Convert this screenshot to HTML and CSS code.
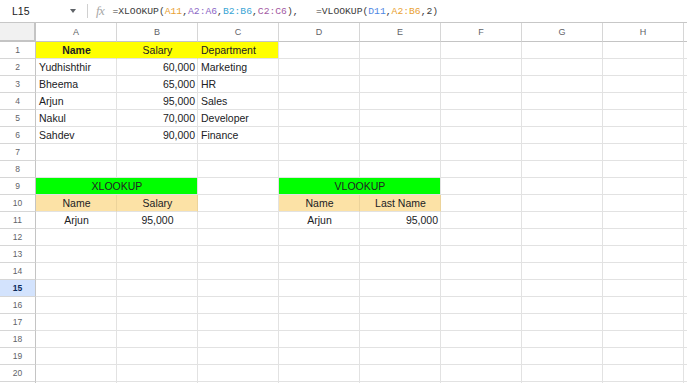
FILE: index.html
```html
<!DOCTYPE html>
<html lang="en">
<head>
  <meta charset="UTF-8">
  <title>XLOOKUP vs VLOOKUP</title>
  <link rel="stylesheet" href="styles.css">
</head>
<body>
  <!-- name box + formula -->
  <div class="formula-bar">
    <div class="name-box">
      <span class="cell-ref">L15</span>
      <span class="caret"></span>
    </div>
    <span class="divider"></span>
    <span class="fx">fx</span>
    <div class="formula">=XLOOKUP(<span class="c-orange">A11</span>,<span class="c-purple">A2:A6</span>,<span class="c-cyan">B2:B6</span>,<span class="c-magenta">C2:C6</span>),&nbsp;&nbsp;&nbsp;=VLOOKUP(<span class="c-blue">D11</span>,<span class="c-orange">A2:B6</span>,2)</div>
  </div>

  <!-- sheet grid -->
  <div class="sheet">
    <div class="corner"></div><div class="col-head">A</div><div class="col-head">B</div><div class="col-head">C</div><div class="col-head">D</div><div class="col-head">E</div><div class="col-head">F</div><div class="col-head">G</div><div class="col-head">H</div><div class="col-head"></div>

    <div class="row-head">1</div><div class="cell yellow center bold">Name</div><div class="cell yellow center">Salary</div><div class="cell yellow last">Department</div><div class="cell"></div><div class="cell"></div><div class="cell"></div><div class="cell"></div><div class="cell"></div><div class="cell"></div>
    <div class="row-head">2</div><div class="cell">Yudhishthir</div><div class="cell right">60,000</div><div class="cell">Marketing</div><div class="cell"></div><div class="cell"></div><div class="cell"></div><div class="cell"></div><div class="cell"></div><div class="cell"></div>
    <div class="row-head">3</div><div class="cell">Bheema</div><div class="cell right">65,000</div><div class="cell">HR</div><div class="cell"></div><div class="cell"></div><div class="cell"></div><div class="cell"></div><div class="cell"></div><div class="cell"></div>
    <div class="row-head">4</div><div class="cell">Arjun</div><div class="cell right">95,000</div><div class="cell">Sales</div><div class="cell"></div><div class="cell"></div><div class="cell"></div><div class="cell"></div><div class="cell"></div><div class="cell"></div>
    <div class="row-head">5</div><div class="cell">Nakul</div><div class="cell right">70,000</div><div class="cell">Developer</div><div class="cell"></div><div class="cell"></div><div class="cell"></div><div class="cell"></div><div class="cell"></div><div class="cell"></div>
    <div class="row-head">6</div><div class="cell">Sahdev</div><div class="cell right">90,000</div><div class="cell">Finance</div><div class="cell"></div><div class="cell"></div><div class="cell"></div><div class="cell"></div><div class="cell"></div><div class="cell"></div>
    <div class="row-head">7</div><div class="cell"></div><div class="cell"></div><div class="cell"></div><div class="cell"></div><div class="cell"></div><div class="cell"></div><div class="cell"></div><div class="cell"></div><div class="cell"></div>
    <div class="row-head">8</div><div class="cell"></div><div class="cell"></div><div class="cell"></div><div class="cell"></div><div class="cell"></div><div class="cell"></div><div class="cell"></div><div class="cell"></div><div class="cell"></div>
    <div class="row-head">9</div><div class="cell green center span2">XLOOKUP</div><div class="cell"></div><div class="cell green center span2">VLOOKUP</div><div class="cell"></div><div class="cell"></div><div class="cell"></div><div class="cell"></div>
    <div class="row-head">10</div><div class="cell peach center">Name</div><div class="cell peach center">Salary</div><div class="cell"></div><div class="cell peach center">Name</div><div class="cell peach center">Last Name</div><div class="cell"></div><div class="cell"></div><div class="cell"></div><div class="cell"></div>
    <div class="row-head">11</div><div class="cell center">Arjun</div><div class="cell center">95,000</div><div class="cell"></div><div class="cell center">Arjun</div><div class="cell right">95,000</div><div class="cell"></div><div class="cell"></div><div class="cell"></div><div class="cell"></div>
    <div class="row-head">12</div><div class="cell"></div><div class="cell"></div><div class="cell"></div><div class="cell"></div><div class="cell"></div><div class="cell"></div><div class="cell"></div><div class="cell"></div><div class="cell"></div>
    <div class="row-head">13</div><div class="cell"></div><div class="cell"></div><div class="cell"></div><div class="cell"></div><div class="cell"></div><div class="cell"></div><div class="cell"></div><div class="cell"></div><div class="cell"></div>
    <div class="row-head">14</div><div class="cell"></div><div class="cell"></div><div class="cell"></div><div class="cell"></div><div class="cell"></div><div class="cell"></div><div class="cell"></div><div class="cell"></div><div class="cell"></div>
    <div class="row-head active">15</div><div class="cell"></div><div class="cell"></div><div class="cell"></div><div class="cell"></div><div class="cell"></div><div class="cell"></div><div class="cell"></div><div class="cell"></div><div class="cell"></div>
    <div class="row-head">16</div><div class="cell"></div><div class="cell"></div><div class="cell"></div><div class="cell"></div><div class="cell"></div><div class="cell"></div><div class="cell"></div><div class="cell"></div><div class="cell"></div>
    <div class="row-head">17</div><div class="cell"></div><div class="cell"></div><div class="cell"></div><div class="cell"></div><div class="cell"></div><div class="cell"></div><div class="cell"></div><div class="cell"></div><div class="cell"></div>
    <div class="row-head">18</div><div class="cell"></div><div class="cell"></div><div class="cell"></div><div class="cell"></div><div class="cell"></div><div class="cell"></div><div class="cell"></div><div class="cell"></div><div class="cell"></div>
    <div class="row-head">19</div><div class="cell"></div><div class="cell"></div><div class="cell"></div><div class="cell"></div><div class="cell"></div><div class="cell"></div><div class="cell"></div><div class="cell"></div><div class="cell"></div>
    <div class="row-head">20</div><div class="cell"></div><div class="cell"></div><div class="cell"></div><div class="cell"></div><div class="cell"></div><div class="cell"></div><div class="cell"></div><div class="cell"></div><div class="cell"></div>
    <div class="row-head"></div><div class="cell"></div><div class="cell"></div><div class="cell"></div><div class="cell"></div><div class="cell"></div><div class="cell"></div><div class="cell"></div><div class="cell"></div><div class="cell"></div>
  </div>
</body>
</html>
```

FILE: styles.css
```css
* {
  margin: 0;
  padding: 0;
  box-sizing: border-box;
}

body {
  width: 687px;
  height: 383px;
  overflow: hidden;
  background: #fff;
  font-family: "Liberation Sans", Arial, sans-serif;
  color: #202124;
}

/* formula bar */
.formula-bar {
  height: 23px;
  display: flex;
  align-items: center;
  border-bottom: 1px solid #c7c7c7;
}

.name-box {
  width: 87px;
  display: flex;
  align-items: center;
  justify-content: space-between;
  padding: 0 11px 0 12px;
}

.cell-ref {
  font-size: 10.5px;
}

.caret {
  width: 0;
  height: 0;
  border-left: 3.5px solid transparent;
  border-right: 3.5px solid transparent;
  border-top: 4px solid #5f6368;
}

.divider {
  width: 1px;
  height: 14px;
  background: #d0d0d0;
}

.fx {
  font-family: "Liberation Serif", serif;
  font-style: italic;
  font-size: 13px;
  color: #a8a8a8;
  margin: 0 8px 0 8px;
  letter-spacing: -0.5px;
}

.formula {
  font-family: "Liberation Mono", monospace;
  font-size: 9.7px;
  white-space: pre;
  color: #3c3c3c;
}

.c-orange { color: #e9a233; }
.c-purple { color: #8c68c6; }
.c-cyan { color: #3aa5d5; }
.c-magenta { color: #a35aa3; }
.c-blue { color: #4f87e3; }

/* grid */
.sheet {
  display: grid;
  grid-template-columns: 36px repeat(9, 81px);
  grid-template-rows: 19px;
  grid-auto-rows: 17px;
}

.corner {
  background: #f1f1f1;
  border-right: 2px solid #c4c4c4;
  border-bottom: 2px solid #c4c4c4;
}

.col-head {
  font-size: 9px;
  color: #5f6368;
  text-align: center;
  line-height: 18px;
  border-right: 1px solid #d6d6d6;
  border-bottom: 1px solid #c4c4c4;
}

.row-head {
  font-size: 8.5px;
  color: #5f6368;
  text-align: center;
  line-height: 16px;
  border-right: 1px solid #c4c4c4;
  border-bottom: 1px solid #d6d6d6;
}

.row-head.active {
  background: #d3e3fd;
  color: #0b2a5c;
  font-weight: bold;
}

.cell {
  font-size: 10.5px;
  line-height: 15px;
  padding: 1px 2px 0 3px;
  white-space: nowrap;
  overflow: hidden;
  border-right: 1px solid #e2e2e2;
  border-bottom: 1px solid #e2e2e2;
}

.center { text-align: center; }
.right { text-align: right; }
.bold { font-weight: bold; }
.span2 { grid-column: span 2; }

.yellow {
  background: #ffff00;
  border-right-color: #ffff00;
}

.yellow.last {
  border-right-color: #e2e2e2;
}

.green {
  background: #00ff00;
}

.peach {
  background: #fce2a6;
  border-right-color: #ecd39a;
}
```
